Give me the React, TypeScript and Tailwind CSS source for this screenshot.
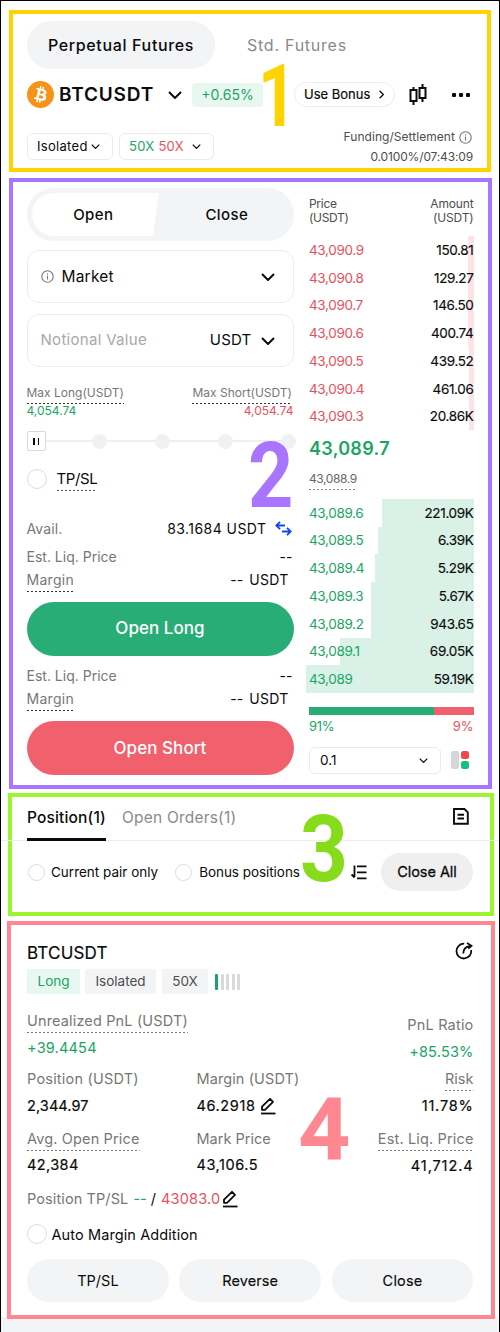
import type { ReactNode } from "react";

type P = { className?: string };

const Chevron = ({ className = "" }: P) => (
  <svg viewBox="0 0 14 8" fill="none" stroke="#0b0b0b" strokeWidth="2" className={className}>
    <path d="M1 1l6 6 6-6" />
  </svg>
);

const Info = ({ className = "" }: P) => (
  <svg viewBox="0 0 13 13" fill="none" stroke="#777" strokeWidth="1.1" className={className}>
    <circle cx="6.5" cy="6.5" r="5.7" />
    <path d="M6.5 5.6v4M6.5 3.2v1.3" />
  </svg>
);

const Bitcoin = () => (
  <svg viewBox="0 0 32 32" className="size-[27px] shrink-0">
    <circle cx="16" cy="16" r="16" fill="#f7931a" />
    <path
      fill="#fff"
      d="M23.189 14.02c.314-2.096-1.283-3.223-3.465-3.975l.708-2.84-1.728-.43-.69 2.765c-.454-.114-.92-.22-1.385-.326l.695-2.783L15.596 6l-.708 2.839c-.376-.086-.746-.17-1.104-.26l.002-.009-2.384-.595-.46 1.846s1.283.294 1.256.312c.7.175.826.638.805 1.006l-.806 3.235c.048.012.11.03.18.057l-.183-.045-1.13 4.532c-.086.212-.303.531-.793.41.018.025-1.256-.313-1.256-.313l-.858 1.978 2.25.561c.418.105.828.215 1.231.318l-.715 2.872 1.727.43.708-2.84c.472.127.93.245 1.378.357l-.706 2.828 1.728.43.715-2.866c2.948.558 5.164.333 6.097-2.333.752-2.146-.037-3.385-1.588-4.192 1.13-.26 1.98-1.003 2.207-2.538zm-3.95 5.538c-.533 2.147-4.148.986-5.32.695l.95-3.805c1.172.293 4.929.872 4.37 3.11zm.535-5.569c-.487 1.953-3.495.96-4.47.717l.86-3.45c.975.243 4.118.696 3.61 2.733z"
    />
  </svg>
);

const Pen = ({ className = "" }: P) => (
  <svg viewBox="0 0 16 18" fill="none" stroke="#0b0b0b" strokeWidth="1.8" className={className}>
    <path d="M1 16.5h14.5" />
    <path d="M2 12.8V9.6L10 1.8l3 3-8 8z" strokeLinejoin="round" />
  </svg>
);

const Radio = ({ className = "" }: P) => (
  <span className={`shrink-0 rounded-full border-[1.5px] border-[#dcdcdc] bg-white ${className}`} />
);

/* Label with a dotted rule below it; the rule takes no room in the line. */
const Dotted = ({ children, className = "", rule = "bottom-[-4px]" }: { children: ReactNode; className?: string; rule?: string }) => (
  <span className={`relative ${className}`}>
    {children}
    <svg className={`absolute left-0 h-[1.5px] w-full ${rule}`}>
      <line x1="0" y1="0.75" x2="100%" y2="0.75" stroke="currentColor" strokeWidth="1.5" strokeDasharray="2 2" />
    </svg>
  </span>
);

const Marker = ({ children, className }: { children: ReactNode; className: string }) => (
  <span className={`absolute z-10 origin-left font-['Roboto',sans-serif] font-bold leading-none ${className}`}>{children}</span>
);

const asks = [
  ["43,090.9", "150.81", 6],
  ["43,090.8", "129.27", 6],
  ["43,090.7", "146.50", 6],
  ["43,090.6", "400.74", 6],
  ["43,090.5", "439.52", 4.5],
  ["43,090.4", "461.06", 4.5],
  ["43,090.3", "20.86K", 4.5],
] as const;

const bids = [
  ["43,089.6", "221.09K", 92],
  ["43,089.5", "6.39K", 95.5],
  ["43,089.4", "5.29K", 99],
  ["43,089.3", "5.67K", 102.5],
  ["43,089.2", "943.65", 102.5],
  ["43,089.1", "69.05K", 133.5],
  ["43,089", "59.19K", 167.5],
] as const;

const BookRow = ({ price, amount, depth, tone }: { price: string; amount: string; depth: number; tone: "ask" | "bid" }) => (
  <div className="relative flex h-[27.75px] items-center justify-between text-[13.5px]">
    <span
      className={`absolute inset-y-0 right-0 ${tone === "ask" ? "bg-[#fde3e6]" : "bg-[#daf1e7]"}`}
      style={{ width: depth }}
    />
    <span className={`relative tracking-[-0.35px] ${tone === "ask" ? "text-[#e8505f]" : "text-[#18a566]"}`}>{price}</span>
    <span className="relative tracking-[-0.35px] text-[#0b0b0b] [-webkit-text-stroke:0.15px_#0b0b0b]">{amount}</span>
  </div>
);

const Estimate = () => (
  <>
    <div className="flex h-[23px] items-center justify-between pr-[1px]">
      <span className="text-[#777]">Est. Liq. Price</span>
      <span>--</span>
    </div>
    <div className="flex h-[23px] items-center justify-between pr-[5px]">
      <Dotted className="tracking-[0.3px] text-[#777]" rule="bottom-[-2px] text-[#333]">Margin</Dotted>
      <span className="flex gap-[6px]">
        <span>--</span>
        <span className="tracking-[0.3px]">USDT</span>
      </span>
    </div>
  </>
);

function Header() {
  return (
    <section className="relative ml-2 mt-[9px] h-[162px] w-[482px] border-4 border-[#ffd200] pl-[14px] pr-[14px] pt-[7px]">
      <div className="flex h-[48px] items-center">
        <div className="flex h-full w-[188px] items-center justify-center rounded-full bg-[#f3f4f6] text-[16px] font-medium tracking-[0.65px]">
          Perpetual Futures
        </div>
        <div className="ml-[32px] text-[16px] tracking-[0.75px] text-[#8a8a8a]">Std. Futures</div>
      </div>
      <div className="mt-[12px] flex h-[27px] items-center">
        <Bitcoin />
        <span className="ml-[5px] w-[109px] pt-[2px] text-[19px] font-semibold tracking-[0.8px]">BTCUSDT</span>
        <Chevron className="h-[8px] w-[14px]" />
        <span className="ml-[10px] flex h-[24px] w-[71px] items-center justify-center rounded-[4px] bg-[#e8f7f0] text-[14px] text-[#18a566]">+0.65%</span>
        <span className="ml-[31px] flex h-[25px] w-[101px] items-center justify-between rounded-full border border-[#ededed] pl-[9px] pr-[8px] text-[13px] [-webkit-text-stroke:0.2px_#0b0b0b]">
          Use Bonus
          <Chevron className="h-[5px] w-[9px] -rotate-90" />
        </span>
        <svg viewBox="0 0 18 22" className="ml-[14px] h-[22px] w-[18px]" fill="none" stroke="#0b0b0b" strokeWidth="2">
          <path d="M4.5 3v3M4.5 17v4M13.500 0v4M13.5 14v4" />
          <rect x="1.500" y="6" width="6" height="11" />
          <rect x="10.500" y="4" width="6" height="10" />
        </svg>
        <span className="ml-[25px] flex gap-[3px]">
          <i className="size-[4px] rounded-[1px] bg-[#0b0b0b]" />
          <i className="size-[4px] rounded-[1px] bg-[#0b0b0b]" />
          <i className="size-[4px] rounded-[1px] bg-[#0b0b0b]" />
        </span>
      </div>
      <div className="mt-[18px] flex justify-between">
        <div className="flex gap-[6px] pt-[7px] text-[13px]">
          <span className="flex h-[27px] w-[86px] items-center justify-between rounded-[6px] border border-[#ebebeb] pl-[9px] pr-[12px] tracking-[0.3px]">
            Isolated
            <Chevron className="h-[5px] w-[9px]" />
          </span>
          <span className="flex h-[27px] w-[95px] items-center justify-between rounded-[6px] border border-[#ebebeb] pl-[9px] pr-[12px] tracking-[0.3px]">
            <span>
              <span className="text-[#18a566]">50X</span> <span className="text-[#e8505f]">50X</span>
            </span>
            <Chevron className="h-[5px] w-[9px]" />
          </span>
        </div>
        <div className="flex flex-col items-end pt-px text-[12px] text-[#4d4d4d]">
          <div className="flex h-[20px] items-center">
            <span className="mr-[4px] tracking-[0.05px]">Funding/Settlement</span>
            <Info className="mr-px size-[13px]" />
          </div>
          <div className="h-[20px] leading-[20px] tracking-[-0.15px]">0.0100%/07:43:09</div>
        </div>
      </div>
      <Marker className="left-[245px] top-[38px] scale-x-[0.76] text-[88px] text-[#ffd200]">1</Marker>
    </section>
  );
}

function OrderForm() {
  return (
    <div className="w-[267px] pt-[6px]">
      <div className="relative flex h-[53px] rounded-full bg-[#f3f4f6] text-[15px] font-medium">
        <svg viewBox="0 0 127 43" className="absolute left-[5px] top-[5px] h-[43px] w-[127px]">
          <path d="M21.500 0H127l-6 43H21.500a21.500 21.500 0 010-43z" fill="#fff" />
        </svg>
        <span className="relative flex w-1/2 items-center justify-center pt-[2px] tracking-[0.4px]">Open</span>
        <span className="relative flex w-1/2 items-center justify-center pt-[2px] tracking-[0.4px]">Close</span>
      </div>
      <div className="mt-[9px] flex h-[53px] items-center rounded-[12px] border border-[#ececec] px-[13px]">
        <Info className="size-[13px]" />
        <span className="ml-[8px] grow text-[15.5px] tracking-[0.2px]">Market</span>
        <Chevron className="mr-[5px] h-[8px] w-[14px]" />
      </div>
      <div className="mt-[11px] flex h-[53px] items-center rounded-[12px] border border-[#ececec] px-[13px] text-[15px]">
        <span className="grow tracking-[0.3px] text-[#a8a8a8]">Notional Value</span>
        <span className="tracking-[0.2px]">USDT</span>
        <Chevron className="ml-[9px] mr-[5px] h-[8px] w-[14px]" />
      </div>
      <div className="mt-[16px] flex h-[20px] items-center justify-between pr-[1.5px] text-[12px] text-[#777]">
        <Dotted rule="bottom-[-2px] text-[#333]">Max Long(USDT)</Dotted>
        <Dotted rule="bottom-[-2px] text-[#333]">Max Short(USDT)</Dotted>
      </div>
      <div className="flex h-[16px] items-center justify-between text-[12px]">
        <span className="text-[#18a566]">4,054.74</span>
        <span className="text-[#e8505f]">4,054.74</span>
      </div>
      <div className="relative mt-[12px] h-[20px] w-[269.500px]">
        <div className="absolute left-[10px] top-[9px] h-[2px] w-[255px] bg-[#eeeff1]" />
        <div className="relative flex h-full items-center justify-between">
          <span className="flex h-[20px] w-[19px] items-center justify-center gap-[3px] rounded-[2px] border-[1.5px] border-[#d8d8d8] bg-white">
            <i className="h-[7px] w-[1.5px] bg-[#0b0b0b]" />
            <i className="h-[7px] w-[1.5px] bg-[#0b0b0b]" />
          </span>
          <i className="ml-[-2px] size-[15px] rounded-full bg-[#f0f1f3]" />
          <i className="size-[15px] rounded-full bg-[#f0f1f3]" />
          <i className="size-[15px] rounded-full bg-[#f0f1f3]" />
          <i className="size-[15px] rounded-full bg-[#f0f1f3]" />
        </div>
      </div>
      <div className="mt-[18px] flex h-[20px] items-center">
        <Radio className="size-[20px]" />
        <Dotted className="ml-[10px] text-[15px] tracking-[-0.4px]" rule="bottom-[-1px] text-[#555]">TP/SL</Dotted>
      </div>
      <div className="text-[14px]">
        <div className="mt-[30px] flex h-[19px] items-center text-[#777]">
          <span className="grow tracking-[0.1px]">Avail.</span>
          <span className="tracking-[0.45px] text-[#0b0b0b]">83.1684 USDT</span>
          <svg viewBox="0 0 17 15" className="ml-[8px] mr-[2px] h-[15px] w-[17px]" fill="none" stroke="#0f46ff" strokeWidth="1.8">
            <path d="M10 4.500H1.500M5 0.800L1.300 4.500 5 8.200M7 10.500h8.500M12 6.800l3.700 3.700L12 14.200" />
          </svg>
        </div>
        <div className="mt-[7px]">
          <Estimate />
        </div>
      </div>
      <button className="mt-[11px] block h-[54px] w-full rounded-full bg-[#28ad76] text-[17px] font-medium tracking-[0.05px] text-white">Open Long</button>
      <div className="mt-[8px] text-[14px]">
        <Estimate />
      </div>
      <button className="mt-[11px] block h-[54px] w-full rounded-full bg-[#f1606d] pt-px text-[17px] font-medium tracking-[0.05px] text-white">Open Short</button>
    </div>
  );
}

function OrderBook() {
  return (
    <div className="ml-[12.500px] w-[167.500px] pl-[3px] pt-[15px]">
      <div className="flex justify-between text-[12px] leading-[13.500px] text-[#4d4d4d]">
        <span className="tracking-[-0.3px]">Price<br />(USDT)</span>
        <span className="text-right tracking-[-0.15px]">Amount<br />(USDT)</span>
      </div>
      <div className="mt-[12px]">
        {asks.map(([p, a, d]) => <BookRow key={p} price={p} amount={a} depth={d} tone="ask" />)}
      </div>
      <div className="mt-[6px] h-[26px] text-[18px] font-semibold leading-[26px] tracking-[0.3px] text-[#18a566]">43,089.7</div>
      <div className="mt-[7px] flex h-[20px] items-center text-[12px] tracking-[-0.4px] text-[#666]">
        <Dotted rule="bottom-[-2px] text-[#888]">43,088.9</Dotted>
      </div>
      <div className="mt-[9.500px]">
        {bids.map(([p, a, d]) => <BookRow key={p} price={p} amount={a} depth={d} tone="bid" />)}
      </div>
      <div className="mt-[14px] flex h-[7.500px]">
        <span className="w-[125px] bg-[#28ad76]" />
        <span className="grow bg-[#f1606d]" />
      </div>
      <div className="mt-[3px] flex h-[19px] items-center justify-between text-[13px]">
        <span className="tracking-[-0.3px] text-[#18a566]">91%</span>
        <span className="text-[#e8505f]">9%</span>
      </div>
      <div className="mt-[10px] flex items-center">
        <div className="flex h-[27px] w-[132px] items-center justify-between rounded-[6px] border border-[#ebebeb] pl-[10px] pr-[12px] text-[13.500px]">
          0.1
          <Chevron className="h-[5px] w-[9px]" />
        </div>
        <div className="ml-[10px] flex gap-[2px]">
          <i className="h-[18px] w-[8px] rounded-[2px] bg-[#d6d6d6]" />
          <div className="flex flex-col gap-[2px]">
            <i className="size-[8px] rounded-[2.500px] bg-[#f5444c]" />
            <i className="size-[8px] rounded-[2.500px] bg-[#16c07c]" />
          </div>
        </div>
      </div>
    </div>
  );
}

function Positions() {
  return (
    <section className="relative ml-[7px] mt-[4px] h-[123px] w-[486px] border-4 border-[#9df52f] pl-[15px] pr-[17px]">
      <div className="absolute -left-[11px] top-[43px] h-px w-[498px] bg-[#ececec]" />
      <div className="relative flex h-[44px] items-center text-[15.500px]">
        <div className="relative flex h-full w-[79px] items-center whitespace-nowrap pb-[3px] font-medium tracking-[0.15px]">
          Position(1)
          <span className="absolute bottom-0 left-0 h-[3px] w-full bg-[#0b0b0b]" />
        </div>
        <span className="ml-[16px] grow pb-[3px] tracking-[0.2px] text-[#8a8a8a]">Open Orders(1)</span>
        <svg viewBox="0 0 16 17" className="mb-[6px] mr-[4px] h-[17px] w-[16px]" fill="none" stroke="#0b0b0b" strokeWidth="1.900">
          <path d="M1 1h10.500L14.800 4.300V15.700H1zM4.500 6.700h6.500M4.500 10.500h6.500" />
        </svg>
      </div>
      <div className="mt-[12px] flex h-[38px] items-center text-[13.500px]">
        <Radio className="ml-px size-[17px]" />
        <span className="ml-[6px]">Current pair only</span>
        <Radio className="ml-[17px] size-[17px]" />
        <span className="ml-[7px] grow tracking-[-0.05px]">Bonus positions</span>
        <svg viewBox="0 0 16 15" className="mr-[14px] h-[15px] w-[16px]" fill="none" stroke="#0b0b0b" strokeWidth="1.800">
          <path d="M6 1.300H15.500M6 7.300H15.500M6 13.300H15.500M3.500 0.500v11.500M0.600 9.500l3 3" />
        </svg>
        <button className="h-[38px] w-[92px] rounded-full bg-[#efefef] text-[14.500px] tracking-[-0.05px] [-webkit-text-stroke:0.300px_#0b0b0b]">Close All</button>
      </div>
      <Marker className="left-[288px] top-[7px] scale-x-[0.91] text-[92px] text-[#86dc1a]">3</Marker>
    </section>
  );
}

function PositionCard() {
  return (
    <section className="relative ml-[6px] mt-[5px] h-[398px] w-[488px] border-4 border-[#ff8791] pl-[16px] pr-[17.500px] pt-[18px] text-[14.500px] text-[#777]">
      <div className="flex h-[22px] items-center justify-between text-[#0b0b0b]">
        <span className="text-[17px] tracking-[0.2px] [-webkit-text-stroke:0.200px_#0b0b0b]">BTCUSDT</span>
        <svg viewBox="0 0 18 18" className="mb-[7px] mr-px size-[18px]" fill="none" stroke="#0b0b0b" strokeWidth="1.800">
          <path d="M9.200 1.700a7.400 7.400 0 107 6.300" />
          <path d="M8.300 11.500c0-4.200 2.300-6.900 6.600-7.400M12 1l4.500 2.800-3.200 2.700" />
        </svg>
      </div>
      <div className="mt-[4px] flex h-[25px] items-center text-[13.500px] text-[#4d4d4d]">
        <span className="flex h-full w-[53px] items-center justify-center bg-[#e8f7f0] text-[#18a566]">Long</span>
        <span className="ml-[5px] flex h-full w-[71px] items-center justify-center rounded-[2px] bg-[#f3f4f6]">Isolated</span>
        <span className="ml-[6px] flex h-full w-[46px] items-center justify-center rounded-[2px] bg-[#f3f4f6]">50X</span>
        <span className="ml-[7px] flex gap-[2.500px]">
          <i className="h-[16px] w-[3px] rounded-[1px] bg-[#18a566]" />
          <i className="h-[16px] w-[3px] rounded-[1px] bg-[#d9d9d9]" />
          <i className="h-[16px] w-[3px] rounded-[1px] bg-[#d9d9d9]" />
          <i className="h-[16px] w-[3px] rounded-[1px] bg-[#d9d9d9]" />
          <i className="h-[16px] w-[3px] rounded-[1px] bg-[#d9d9d9]" />
        </span>
      </div>
      <div className="mt-[15px] flex h-[66px] justify-between">
        <div>
          <div className="h-[24px] leading-[24px]"><Dotted className="tracking-[0.150px]">Unrealized PnL (USDT)</Dotted></div>
          <div className="mt-[3px] h-[24px] leading-[24px] tracking-[0.200px] text-[#18a566]">+39.4454</div>
        </div>
        <div className="pt-[4px] text-right">
          <div className="h-[24px] leading-[24px] tracking-[0.200px]">PnL Ratio</div>
          <div className="mt-[3px] h-[24px] leading-[24px] tracking-[0.200px] text-[#18a566]">+85.53%</div>
        </div>
      </div>
      <div className="-mt-[8px] grid grid-cols-[169.500px_1fr_auto] leading-[24px]">
        <span className="tracking-[0.200px]">Position (USDT)</span>
        <span className="tracking-[0.100px]">Margin (USDT)</span>
        <span className="text-right"><Dotted>Risk</Dotted></span>
        <span className="mt-[3px] text-[#0b0b0b] [-webkit-text-stroke:0.200px_#0b0b0b] tracking-[0.100px]">2,344.97</span>
        <span className="mt-[3px] flex items-center text-[#0b0b0b]">
          <span className="tracking-[0.600px] [-webkit-text-stroke:0.200px_#0b0b0b]">46.2918</span>
          <Pen className="ml-[5px] h-[18px] w-[16px]" />
        </span>
        <span className="mt-[3px] text-right text-[#0b0b0b] [-webkit-text-stroke:0.200px_#0b0b0b] tracking-[0.800px]">11.78%</span>
        <span className="mt-[9px] tracking-[0.150px]"><Dotted>Avg. Open Price</Dotted></span>
        <span className="mt-[9px]">Mark Price</span>
        <span className="mt-[9px] text-right tracking-[0.150px]"><Dotted>Est. Liq. Price</Dotted></span>
        <span className="mt-[2px] text-[#0b0b0b] [-webkit-text-stroke:0.200px_#0b0b0b] tracking-[0.400px]">42,384</span>
        <span className="mt-[2px] text-[#0b0b0b] [-webkit-text-stroke:0.200px_#0b0b0b] tracking-[0.550px]">43,106.5</span>
        <span className="mt-[3px] text-right text-[#0b0b0b] [-webkit-text-stroke:0.200px_#0b0b0b] tracking-[0.900px]">41,712.4</span>
      </div>
      <div className="mt-[9px] flex h-[24px] items-center">
        <span className="tracking-[0.100px]">Position TP/SL</span>
        <span className="ml-[5px] text-[#18a566]">--</span>
        <span className="ml-[4px] text-[#0b0b0b]">/</span>
        <span className="ml-[5px] tracking-[0.200px] text-[#e8505f]">43083.0</span>
        <Pen className="ml-[2px] h-[18px] w-[16px]" />
      </div>
      <div className="mt-[11px] flex h-[24px] items-center text-[#0b0b0b]">
        <Radio className="size-[20px]" />
        <span className="ml-[4.500px] pt-px tracking-[0.100px]">Auto Margin Addition</span>
      </div>
      <div className="mt-[13px] grid grid-cols-3 gap-[10.500px] text-[#0b0b0b]">
        <button className="h-[43px] rounded-full bg-[#f3f4f6]">TP/SL</button>
        <button className="h-[43px] rounded-full bg-[#f3f4f6] tracking-[0.100px] [-webkit-text-stroke:0.150px_#0b0b0b]">Reverse</button>
        <button className="h-[43px] rounded-full bg-[#f3f4f6] tracking-[0.200px] [-webkit-text-stroke:0.150px_#0b0b0b]">Close</button>
      </div>
      <Marker className="left-[287px] top-[161px] scale-x-[1.04] text-[88px] text-[#ff8791]">4</Marker>
    </section>
  );
}

export default function App() {
  return (
    <main className="h-[1332px] w-[500px] overflow-hidden border-x border-t border-black bg-[linear-gradient(#fff_1316px,#f3f4f6_1316px)] font-['Inter',sans-serif] text-[#0b0b0b]">
      <Header />
      <section className="relative ml-2 mt-[6px] flex h-[611px] w-[483px] border-4 border-[#a974ff] pl-[13.500px]">
        <OrderForm />
        <OrderBook />
        <Marker className="left-[235px] top-[250px] scale-x-[0.88] text-[90px] text-[#a974ff]">2</Marker>
      </section>
      <Positions />
      <PositionCard />
    </main>
  );
}
